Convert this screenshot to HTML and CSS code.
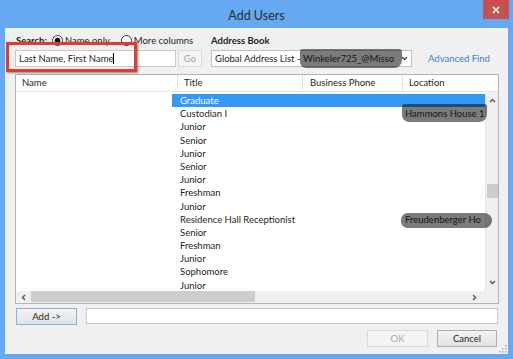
FILE: index.html
```html
<!DOCTYPE html>
<html lang="en">
<head>
  <meta charset="UTF-8" />
  <title>Add Users</title>
  <link rel="stylesheet" href="styles.css">
</head>
<body>
  <div class="window">
    <div class="titlebar">
      <span></span>
      <div class="title">Add Users</div>
      <div class="close">
        <svg width="8" height="8" viewBox="0 0 8 8"><path d="M1 1L7 7M7 1L1 7" stroke="#fff" stroke-width="1.6"/></svg>
      </div>
    </div>

    <div class="client">
      <div class="labels">
        <div class="search-opts">
          <b>Search:</b>
          <span class="radio"><span class="dot on"></span>Name only</span>
          <span class="radio second"><span class="dot"></span>More columns</span>
        </div>
        <b>Address Book</b>
      </div>

      <div class="fields">
        <div class="search-box">
          <div class="input">Last Name, First Name<span class="caret"></span></div>
          <div class="highlight"></div>
        </div>
        <div class="btn go">Go</div>
        <div class="select">
          <span>Global Address List -&nbsp;</span><span class="blot blot-book">Winkeler725_@Misso</span>
          <svg class="chev" width="7" height="5" viewBox="0 0 7 5"><path d="M1 1L3.5 3.5L6 1" fill="none" stroke="#444" stroke-width="1.3"/></svg>
        </div>
        <a class="link">Advanced Find</a>
      </div>

      <div class="list">
        <div class="list-head">
          <div class="col c-name">Name</div>
          <div class="col c-title">Title</div>
          <div class="col c-phone">Business Phone</div>
          <div class="col c-loc">Location</div>
        </div>
        <div class="list-main">
          <div class="rows">
            <div class="row sel"><span>Graduate</span><span></span><span></span></div>
            <div class="row"><span>Custodian I</span><span></span><span><span class="blot blot-a">Hammons House 1</span></span></div>
            <div class="row"><span>Junior</span><span></span><span></span></div>
            <div class="row"><span>Senior</span><span></span><span></span></div>
            <div class="row"><span>Junior</span><span></span><span></span></div>
            <div class="row"><span>Senior</span><span></span><span></span></div>
            <div class="row"><span>Junior</span><span></span><span></span></div>
            <div class="row"><span>Freshman</span><span></span><span></span></div>
            <div class="row"><span>Junior</span><span></span><span></span></div>
            <div class="row"><span>Residence Hall Receptionist</span><span></span><span><span class="blot blot-b">Freudenberger Ho</span></span></div>
            <div class="row"><span>Senior</span><span></span><span></span></div>
            <div class="row"><span>Freshman</span><span></span><span></span></div>
            <div class="row"><span>Junior</span><span></span><span></span></div>
            <div class="row"><span>Sophomore</span><span></span><span></span></div>
            <div class="row"><span>Junior</span><span></span><span></span></div>
          </div>
          <div class="vscroll">
            <div class="arrow"><svg width="7" height="5" viewBox="0 0 7 5"><path d="M1 4L3.5 1.5L6 4" fill="none" stroke="#555" stroke-width="1.4"/></svg></div>
            <div class="track"><div class="thumb"></div></div>
            <div class="arrow"><svg width="7" height="5" viewBox="0 0 7 5"><path d="M1 1L3.5 3.5L6 1" fill="none" stroke="#555" stroke-width="1.4"/></svg></div>
          </div>
        </div>
        <div class="hscroll-row">
          <div class="hscroll">
            <div class="harrow"><svg width="5" height="7" viewBox="0 0 5 7"><path d="M4 1L1.5 3.5L4 6" fill="none" stroke="#555" stroke-width="1.4"/></svg></div>
            <div class="hthumb"></div>
            <div class="harrow right"><svg width="5" height="7" viewBox="0 0 5 7"><path d="M1 1L3.5 3.5L1 6" fill="none" stroke="#555" stroke-width="1.4"/></svg></div>
          </div>
          <div class="corner"></div>
        </div>
      </div>

      <div class="add-row">
        <div class="btn add">Add -&gt;</div>
        <div class="note-field"></div>
      </div>

      <div class="actions">
        <div class="btn ok">OK</div>
        <div class="btn cancel">Cancel</div>
      </div>

      <svg class="grip" width="8" height="8" viewBox="0 0 8 8">
        <rect x="6" y="0" width="1.5" height="1.5" fill="#aaa"/>
        <rect x="3" y="3" width="1.5" height="1.5" fill="#aaa"/>
        <rect x="6" y="3" width="1.5" height="1.5" fill="#aaa"/>
        <rect x="0" y="6" width="1.5" height="1.5" fill="#aaa"/>
        <rect x="3" y="6" width="1.5" height="1.5" fill="#aaa"/>
        <rect x="6" y="6" width="1.5" height="1.5" fill="#aaa"/>
      </svg>
    </div>
  </div>
</body>
</html>
```

FILE: styles.css
```css
* {
  box-sizing: border-box;
}
body {
  margin: 0;
  background: #65a9f2;
  font-family: Lato, "Open Sans", sans-serif;
  font-size: 9.5px;
  color: #1e1e1e;
}
.window {
  width: 513px;
  height: 359px;
  display: flex;
  flex-direction: column;
  padding: 0 5px 5px;
}
.titlebar {
  height: 28px;
  display: grid;
  grid-template-columns: 1fr auto 1fr;
}
.title {
  font-size: 12.5px;
  color: #2d2d2d;
  align-self: center;
  padding-top: 2px;
}
.close {
  justify-self: end;
  width: 26px;
  height: 19px;
  margin-right: -1px;
  background: #c75050;
  display: flex;
  align-items: center;
  justify-content: center;
}
.client {
  flex: 1;
  background: #f0f0f0;
  padding: 6px 9px 0 10px;
  position: relative;
  display: flex;
  flex-direction: column;
}
b {
  font-weight: 700;
}
.labels {
  display: flex;
  align-items: center;
  height: 13px;
}
.search-opts {
  width: 196px;
  padding-left: 1px;
  display: flex;
  align-items: center;
}
.radio {
  display: flex;
  align-items: center;
  margin-left: 5px;
}
.radio.second {
  margin-left: 11px;
}
.dot {
  width: 11px;
  height: 11px;
  border: 1px solid #333;
  border-radius: 50%;
  background: #fff;
  margin-right: 2px;
}
.dot.on {
  background: radial-gradient(circle, #111 0 2.6px, #fff 3.2px);
}
.fields {
  display: flex;
  height: 17px;
  margin-top: 3px;
}
.search-box {
  position: relative;
  width: 161px;
}
.input {
  height: 17px;
  border: 1px solid #c9c9c9;
  background: #fff;
  padding-left: 3px;
  line-height: 15px;
}
.caret {
  display: inline-block;
  width: 1px;
  height: 11px;
  background: #000;
  vertical-align: -2px;
}
.highlight {
  position: absolute;
  left: -9px;
  top: -8px;
  width: 131px;
  height: 30px;
  border: 3px solid #e23b32;
  box-shadow: 1px 1px 2px rgba(0,0,0,0.45);
}
.btn {
  border: 1px solid #adadad;
  background: linear-gradient(#f3f3f3, #e2e2e2);
  display: flex;
  align-items: center;
  justify-content: center;
}
.go {
  width: 24px;
  margin-left: 2px;
  border-color: #dadada;
  background: #f5f5f5;
  color: #a3a3a3;
}
.select {
  width: 201px;
  margin-left: 9px;
  border: 1px solid #c0c0c0;
  background: #fff;
  display: flex;
  align-items: center;
  padding-left: 3px;
  white-space: nowrap;
}
.chev {
  margin-left: auto;
  margin-right: 3px;
}
.link {
  margin-left: 16px;
  color: #3a80d2;
  line-height: 17px;
}
.blot {
  position: relative;
}
.blot::after {
  content: "";
  position: absolute;
  background: rgba(15,15,15,0.55);
  z-index: 1;
}
.blot-book::after {
  inset: -4px -8px -4px -3px;
  border-radius: 2px 3px 8px 6px;
}
.blot-a::after {
  inset: -4px -2px -3px -3px;
  border-radius: 3px 2px 8px 7px;
}
.blot-b::after {
  inset: -1px -11px -3px -4px;
  border-radius: 7px 8px 8px 7px;
}
.list {
  margin-top: 7px;
  height: 230px;
  border: 1px solid #b4b4b4;
  background: #fff;
  display: flex;
  flex-direction: column;
}
.list-head {
  height: 17px;
  display: flex;
  border-bottom: 1px solid #e3e3e3;
  flex-shrink: 0;
}
.col {
  border-right: 1px solid #e3e3e3;
  padding-left: 6px;
  line-height: 16px;
}
.c-name {
  width: 162px;
}
.c-title {
  width: 125px;
}
.c-phone {
  width: 100px;
  padding-left: 7px;
}
.c-loc {
  flex: 1;
  border-right: none;
}
.list-main {
  height: 199px;
  display: flex;
  overflow: hidden;
  flex-shrink: 0;
}
.rows {
  flex: 1;
  padding-top: 2px;
}
.row {
  display: grid;
  grid-template-columns: 131px 100px 1fr;
  margin-left: 156px;
  height: 13.2px;
  line-height: 13.2px;
  white-space: nowrap;
}
.row > span:first-child {
  padding-left: 8px;
}
.row > span:last-child {
  padding-left: 2px;
}
.row.sel {
  background: #3399f5;
  color: #fff;
}
.vscroll {
  width: 16px;
  border-left: 1px solid #e3e3e3;
  background: #f0f0f0;
  display: flex;
  flex-direction: column;
}
.arrow {
  height: 17px;
  display: flex;
  align-items: center;
  justify-content: center;
}
.track {
  flex: 1;
  padding-top: 75px;
}
.thumb {
  width: 12px;
  height: 14px;
  margin-left: 1px;
  background: #cdcdcd;
}
.hscroll-row {
  height: 12px;
  display: flex;
  background: #f0f0f0;
  flex-shrink: 0;
}
.hscroll {
  flex: 1;
  display: flex;
  align-items: stretch;
}
.harrow {
  width: 15px;
  display: flex;
  align-items: center;
  justify-content: center;
}
.harrow.right {
  margin-left: auto;
}
.hthumb {
  width: 224px;
  background: #cdcdcd;
  margin: 0 0 1px;
}
.corner {
  width: 16px;
}
.add-row {
  display: flex;
  height: 17px;
  margin-top: 4px;
}
.add {
  width: 61px;
  margin-left: 1px;
  border-color: #7eb4ea;
}
.note-field {
  flex: 1;
  margin-left: 9px;
  margin-right: 1px;
  height: 16px;
  border: 1px solid #c9c9c9;
  background: #fff;
}
.actions {
  display: flex;
  justify-content: flex-end;
  gap: 9px;
  height: 17px;
  margin-top: 5px;
  padding-right: 2px;
}
.ok {
  width: 61px;
  border-color: #d9d9d9;
  background: #f4f4f4;
  color: #a8a8a8;
}
.cancel {
  width: 60px;
}
.grip {
  position: absolute;
  right: 1px;
  bottom: 1px;
}
```
